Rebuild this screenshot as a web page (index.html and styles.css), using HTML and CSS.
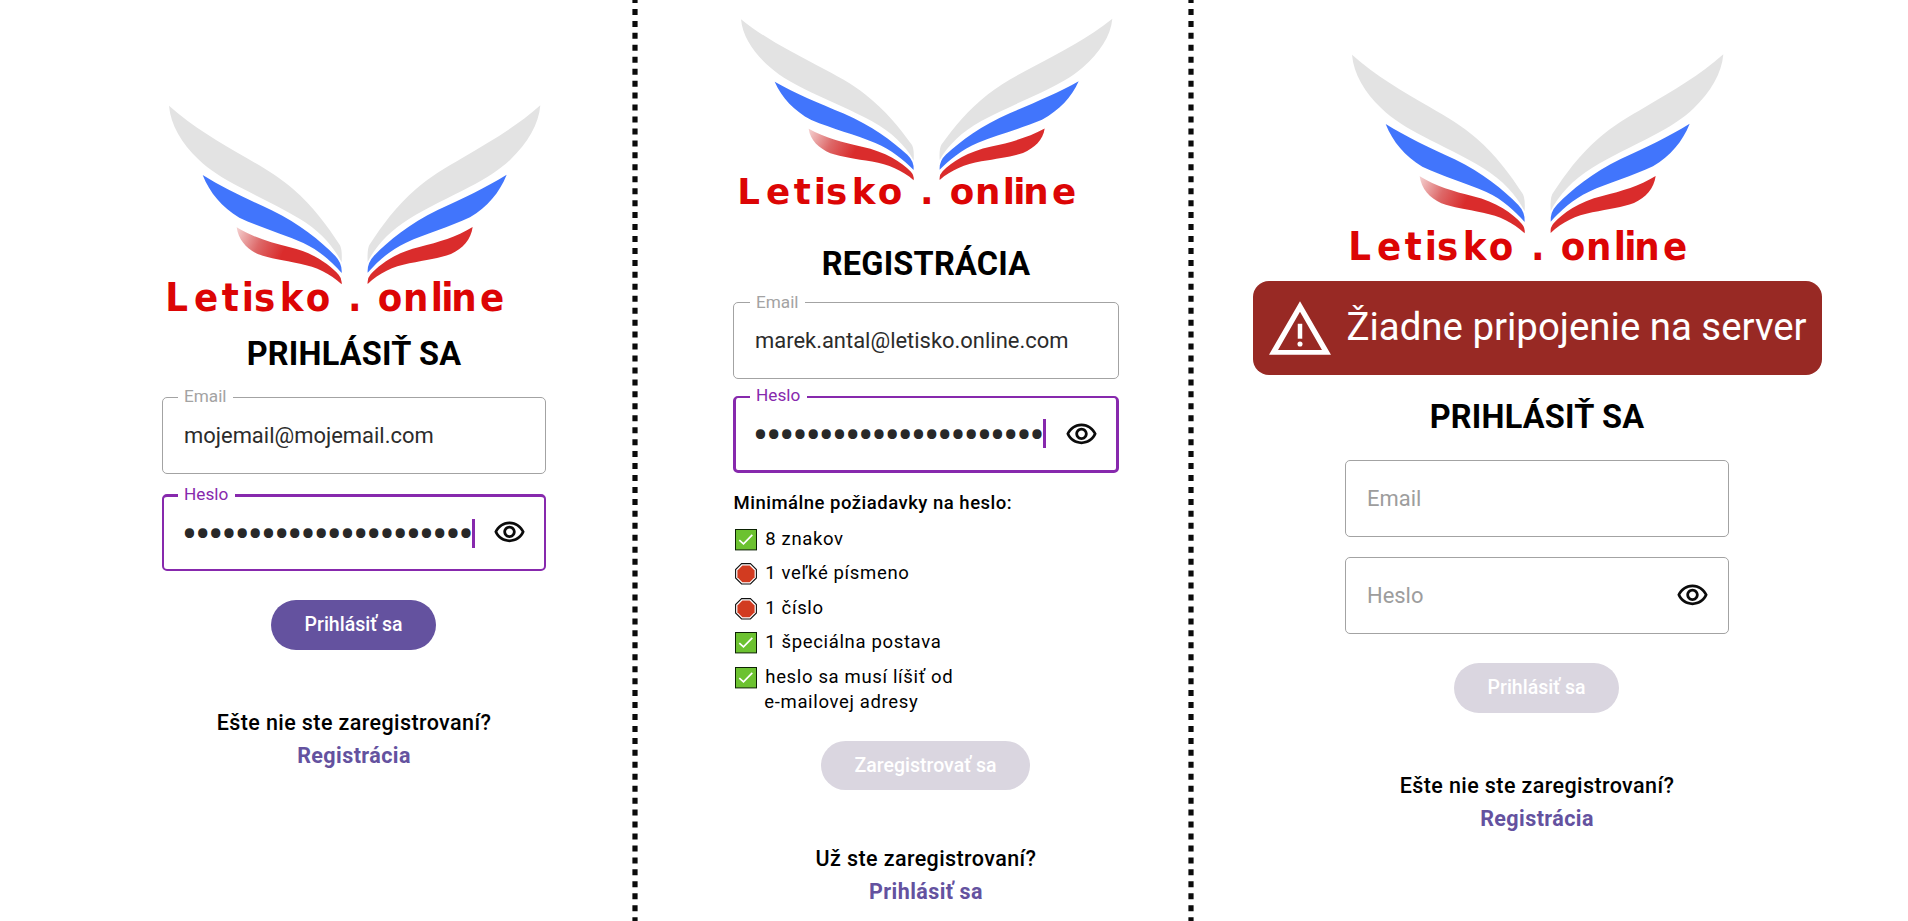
FILE: index.html
```html
<!DOCTYPE html>
<html lang="sk">
<head>
<meta charset="utf-8">
<title>Letisko.online</title>
<link rel="stylesheet" href="styles.css">
</head>
<body>
<svg class="defs" aria-hidden="true">
  <defs>
    <linearGradient id="fade" gradientUnits="userSpaceOnUse" x1="262" y1="420" x2="400" y2="485">
      <stop offset="0" stop-color="#f3cccc"/><stop offset=".5" stop-color="#dd6868"/><stop offset="1" stop-color="#da2c2c"/>
    </linearGradient>
    <path id="feather-top" d="M57 47C130 112 205 154 290 204C340 233 390 262 430 298C490 350 530 405 570 466Q577 480 575 517C550 468 510 424 450 387C395 354 330 323 270 292C220 266 178 240 145 208C95 160 62 105 57 47Z"/>
    <path id="feather-mid" d="M158 255C220 294 290 326 365 361C450 402 510 452 556 498Q577 520 575 549C545 516 510 482 460 459C400 432 330 412 268 383C215 350 180 310 158 255Z"/>
    <path id="feather-low" d="M260 412C310 442 360 457 420 472C490 488 540 525 566 554Q577 566 575 583C540 550 500 531 450 521C400 511 360 506 325 493C290 477 265 450 260 412Z"/>
    <symbol id="logo" viewBox="0 0 1200 690" preserveAspectRatio="none">
      <use href="#feather-top" fill="#e3e3e3"/>
      <use href="#feather-mid" fill="#4175fc"/>
      <use href="#feather-low" fill="url(#fade)"/>
      <g transform="translate(1228 -1) scale(-1 1)">
        <use href="#feather-top" fill="#e3e3e3"/>
        <use href="#feather-mid" fill="#4175fc"/>
        <use href="#feather-low" fill="#da2c2c"/>
      </g>
      <text class="wordmark" y="662" x="46 132 215 275 312 389 467 594 683 759 842 874 904 990">Letisko.online</text>
    </symbol>
    <symbol id="eye" viewBox="0 0 24 24">
      <path d="M12 6c3.79 0 7.17 2.13 8.82 5.5C19.17 14.87 15.79 17 12 17s-7.17-2.13-8.82-5.5C4.83 8.13 8.21 6 12 6m0-2C7 4 2.73 7.11 1 11.5 2.73 15.89 7 19 12 19s9.27-3.11 11-7.5C21.27 7.11 17 4 12 4zm0 5c1.38 0 2.5 1.12 2.5 2.5S13.38 14 12 14s-2.5-1.12-2.5-2.5S10.62 9 12 9m0-2c-2.48 0-4.5 2.02-4.5 4.5S9.52 16 12 16s4.5-2.02 4.5-4.5S14.48 7 12 7z"/>
    </symbol>
    <symbol id="ok" viewBox="0 0 22 22">
      <rect x=".5" y=".5" width="21" height="20.4" fill="#6cc230" stroke="#0c2203"/>
      <path d="M4.3 11.2l4.2 3.7 8.8-9" fill="none" stroke="#fff" stroke-width="1.7"/>
    </symbol>
    <symbol id="stop" viewBox="0 0 22 22">
      <path d="M6.6.6h8.8l6 6v8.4l-6 6H6.6l-6-6V6.6z" fill="#fff" stroke="#111" stroke-width="1.1"/>
      <path d="M7.4 2.4h7.2l5 5v6.8l-5 5H7.4l-5-5V7.4z" fill="#d23b20"/>
    </symbol>
  </defs>
</svg>

<main class="board">
  <section class="panel login">
    <svg class="logo"><use href="#logo"/></svg>
    <h1 class="title">PRIHLÁSIŤ SA</h1>
    <div class="field email"><span class="label">Email</span><span class="value">mojemail@mojemail.com</span></div>
    <div class="field focus"><span class="label">Heslo</span><span class="dots"><span>••••••••••••••••••••••</span></span><i class="caret"></i><svg class="eye"><use href="#eye"/></svg></div>
    <button class="btn">Prihlásiť sa</button>
    <p class="ask">Ešte nie ste zaregistrovaní?</p>
    <a class="link">Registrácia</a>
  </section>

  <svg class="divider"><line x1="3" y1="0" x2="3" y2="921"/></svg>

  <section class="panel register">
    <svg class="logo"><use href="#logo"/></svg>
    <h1 class="title">REGISTRÁCIA</h1>
    <div class="field email"><span class="label">Email</span><span class="value">marek.antal@letisko.online.com</span></div>
    <div class="field focus"><span class="label">Heslo</span><span class="dots"><span>••••••••••••••••••••••</span></span><i class="caret"></i><svg class="eye"><use href="#eye"/></svg></div>
    <h2 class="rules-title">Minimálne požiadavky na heslo:</h2>
    <ul class="rules">
      <li><svg><use href="#ok"/></svg><span>8 znakov</span></li>
      <li><svg><use href="#stop"/></svg><span>1 veľké písmeno</span></li>
      <li><svg><use href="#stop"/></svg><span>1 číslo</span></li>
      <li><svg><use href="#ok"/></svg><span>1 špeciálna postava</span></li>
      <li><svg><use href="#ok"/></svg><span>heslo sa musí líšiť od<br><span class="wrap">e-mailovej adresy</span></span></li>
    </ul>
    <button class="btn wide off">Zaregistrovať sa</button>
    <p class="ask">Už ste zaregistrovaní?</p>
    <a class="link">Prihlásiť sa</a>
  </section>

  <svg class="divider"><line x1="3" y1="0" x2="3" y2="921"/></svg>

  <section class="panel offline">
    <svg class="logo"><use href="#logo"/></svg>
    <div class="alert">
      <svg class="warn" viewBox="1 2 22 19"><path fill="#fff" d="M12 5.7L19.8 19.3H4.2zM12 2L1 21h22z" fill-rule="evenodd"/><path fill="#fff" d="M11.2 10h1.6v5.3h-1.6z"/><circle cx="12" cy="17.2" r=".9" fill="#fff"/></svg>
      <span>Žiadne pripojenie na server</span>
    </div>
    <h1 class="title">PRIHLÁSIŤ SA</h1>
    <div class="field email"><span class="value hint">Email</span></div>
    <div class="field"><span class="value hint">Heslo</span><svg class="eye"><use href="#eye"/></svg></div>
    <button class="btn off">Prihlásiť sa</button>
    <p class="ask">Ešte nie ste zaregistrovaní?</p>
    <a class="link">Registrácia</a>
  </section>
</main>
</body>
</html>
```
FILE: styles.css
```css
* { box-sizing: border-box; margin: 0; padding: 0; }
body { width: 1908px; height: 921px; overflow: hidden; background: #fff; color: #000; font-family: Roboto, "Open Sans", sans-serif; }
.defs { display: block; width: 0; height: 0; position: absolute; }

.board { display: grid; grid-template-columns: 632px 6px 550px 6px 714px; height: 921px; }
.divider { display: block; width: 6px; height: 921px; }
.divider line { stroke: #0b0b0b; stroke-width: 5.2; stroke-dasharray: 6 5.95; stroke-dashoffset: 3; }

.panel { display: flex; flex-direction: column; align-items: center; }
.login { padding: 90px 86px 0 162px; }
.register { padding: 5px 69px 0 95px; }
.offline { padding: 39px 86px 0 58px; }

.logo { display: block; flex: none; width: 400px; height: 230px; margin-left: -8px; }
.register .logo { height: 207.4px; }
.wordmark { font: bold 119px "DejaVu Sans Condensed", "DejaVu Sans", sans-serif; font-stretch: condensed; fill: #dc0505; }

.title { height: 38px; line-height: 38px; font-size: 32.5px; font-weight: 700; letter-spacing: .2px; white-space: nowrap; }
.login .title { margin-top: 15px; }
.register .title { margin-top: 32.6px; }
.offline .title { margin-top: 23px; }

.field { position: relative; flex: none; width: 384px; height: 77px; border: 1.3px solid #a3a3a3; border-radius: 5px; display: flex; align-items: center; padding-left: 21px; color: #2b2b2b; font-size: 21.95px; }
.register .field { width: 386px; }
.email { margin: 24px 0 20px; }
.register .email { margin: 19px 0 17px; }
.field.focus { border: 2px solid #8729ad; border-top-width: 3px; padding-left: 20px; }
.register .field.focus { border-width: 2px 3px 3px; padding-left: 19px; }
.label { position: absolute; top: -13px; left: 15px; height: 22px; line-height: 22px; padding: 0 6px; background: #fff; color: #a3a3a3; font-size: 17.2px; }
.register .label { top: -12px; left: 16px; }
.focus .label, .register .focus .label { top: -14px; left: 14px; padding-right: 7px; color: #8729ad; }
.value { white-space: nowrap; padding-bottom: 1px; }
.register .value { padding: 0; }
.hint { color: #9d9d9d; padding-bottom: 0; }
.dots { width: 287.5px; height: 32px; padding-top: 2px; overflow: hidden; display: flex; justify-content: flex-end; align-items: center; color: #282828; font-size: 46px; letter-spacing: -2.35px; line-height: 30px; white-space: nowrap; }
.caret { width: 3px; height: 29px; background: #8729ad; }
.eye { position: absolute; right: 19.5px; top: 50%; margin-top: -17px; width: 33px; height: 33px; fill: #0b0b0b; }
.focus .eye { right: 18px; }
.register .eye { right: 18px; margin-top: -16px; }

.btn { flex: none; width: 164.5px; height: 49.5px; margin: 29px 1px .5px 0; border: 0; border-radius: 25px; background: #64529f; color: #fff; font: 500 19.5px Roboto, sans-serif; }
.btn.wide { width: 208.5px; margin-top: 17px; }
.btn.off { background: #dad6e0; }
.ask { margin-top: 60px; height: 26px; line-height: 26px; font-size: 21.5px; font-weight: 500; letter-spacing: .4px; white-space: nowrap; }
.register .ask { margin-top: 55.5px; }
.link { margin-top: 7px; height: 26px; line-height: 26px; font-size: 21.5px; font-weight: 700; letter-spacing: .42px; color: #64529f; }

.rules-title { align-self: flex-start; margin: 18px 0 0 .5px; height: 24px; line-height: 24px; font-size: 18.5px; font-weight: 500; letter-spacing: .5px; white-space: nowrap; }
.rules { align-self: flex-start; list-style: none; margin: 12px 0 0 2px; font-size: 18.5px; letter-spacing: .65px; line-height: 25px; }
.rules li { display: flex; gap: 8.3px; margin-bottom: 9.4px; }
.rules svg { width: 22px; height: 22px; margin-top: 2px; flex: none; }
.wrap { margin-left: -1px; }

.alert { flex: none; width: 569px; height: 93.5px; margin: 12px 0 .5px; border-radius: 16px; background: #982924; color: #fff; display: flex; align-items: center; padding-left: 16px; gap: 16px; font-size: 38.4px; white-space: nowrap; }
.alert span { padding-bottom: 2px; }
.warn { width: 62px; height: 54px; }
```
